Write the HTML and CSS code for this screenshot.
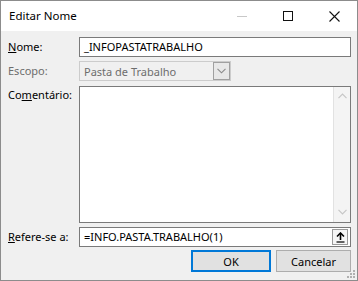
FILE: index.html
```html
<!DOCTYPE html>
<html lang="pt">
<head>
<meta charset="utf-8">
<link rel="stylesheet" href="styles.css">
</head>
<body>
<div class="window">
  <div class="titlebar">
    <div class="title">Editar Nome</div>
    <div class="controls">
      <div class="ctl"><svg width="10" height="10" viewBox="0 0 10 10"><line x1="0" y1="5.5" x2="10" y2="5.5" stroke="#c8c8c8" stroke-width="1"/></svg></div>
      <div class="ctl"><svg width="10" height="10" viewBox="0 0 10 10"><rect x="0.5" y="0.5" width="9" height="9" fill="none" stroke="#111" stroke-width="1"/></svg></div>
      <div class="ctl"><svg width="11" height="11" viewBox="0 0 11 11"><path d="M0.5 0.5 L10.5 10.5 M10.5 0.5 L0.5 10.5" stroke="#111" stroke-width="1.1"/></svg></div>
    </div>
  </div>
  <div class="content">
    <div class="row r1">
      <label class="lbl"><u>N</u>ome:</label>
      <div class="field">_INFOPASTATRABALHO</div>
    </div>
    <div class="row r2">
      <label class="lbl dis">Escopo:</label>
      <div class="select">
        <span class="sel-text">Pasta de Trabalho</span>
        <span class="sel-btn"><svg width="9" height="6" viewBox="0 0 9 6"><path d="M0.5 0.8 L4.5 4.8 L8.5 0.8" fill="none" stroke="#8a8a8a" stroke-width="1.1"/></svg></span>
      </div>
    </div>
    <div class="row r3">
      <label class="lbl">Co<u>m</u>entário:</label>
      <div class="textarea">
        <div class="scroll">
          <svg width="9" height="6" viewBox="0 0 9 6"><path d="M0.5 5.2 L4.5 1.2 L8.5 5.2" fill="none" stroke="#c6c6c6" stroke-width="1.2"/></svg>
          <svg width="9" height="6" viewBox="0 0 9 6"><path d="M0.5 0.8 L4.5 4.8 L8.5 0.8" fill="none" stroke="#c6c6c6" stroke-width="1.2"/></svg>
        </div>
      </div>
    </div>
    <div class="row r4">
      <label class="lbl"><u>R</u>efere-se a:</label>
      <div class="field ref">
        <span>=INFO.PASTA.TRABALHO(1)</span>
        <span class="collapse"><svg width="9" height="11" viewBox="0 0 9 11"><path d="M4.5 1 L4.5 8" stroke="#000" stroke-width="1.6"/><path d="M1 4.5 L4.5 1 L8 4.5" fill="none" stroke="#000" stroke-width="1.6"/><path d="M0.5 10 L8.5 10" stroke="#000" stroke-width="1.2"/></svg></span>
      </div>
    </div>
    <div class="buttons">
      <div class="btn ok">OK</div>
      <div class="btn">Cancelar</div>
    </div>
  </div>
  <svg class="grip" width="12" height="12" viewBox="0 0 12 12"><g fill="#b0b0b0"><rect x="9" y="9" width="2" height="2"/><rect x="6" y="9" width="2" height="2"/><rect x="9" y="6" width="2" height="2"/><rect x="3" y="9" width="2" height="2"/><rect x="6" y="6" width="2" height="2"/><rect x="9" y="3" width="2" height="2"/></g></svg>
</div>
</body>
</html>
```
FILE: styles.css
```css
* { box-sizing: border-box; }
html, body { margin: 0; padding: 0; background: #f0f0f0; }
body { font-family: "Noto Sans", "Open Sans", sans-serif; font-size: 11px; color: #000; }
.window {
  position: relative;
  width: 358px;
  height: 281px;
  border: 1px solid #8c8c8c;
  background: #f0f0f0;
  display: flex;
  flex-direction: column;
}
.titlebar {
  height: 30px;
  background: #fff;
  display: flex;
  align-items: center;
  flex: none;
}
.title { padding-left: 8px; flex: 1; line-height: 16px; padding-bottom: 1px; font-size: 11.5px; }
.controls { display: flex; height: 30px; }
.ctl { width: 46px; height: 30px; display: flex; align-items: center; justify-content: center; }
.content { padding: 6px 6px 0 7px; display: flex; flex-direction: column; }
.row { display: grid; grid-template-columns: 71px 1fr; align-items: center; }
.lbl { line-height: 16px; }
.lbl.dis { color: #6d6d6d; }
.field {
  height: 20px;
  background: #fff;
  border: 1px solid #7a7a7a;
  padding-left: 4px;
  line-height: 18px;
  display: flex;
  align-items: center;
}
.r2 { margin-top: 4px; }
.select {
  width: 152px;
  height: 20px;
  border: 1px solid #cccccc;
  display: flex;
  align-items: center;
  justify-content: space-between;
  color: #6d6d6d;
  padding-left: 4px;
}
.sel-btn {
  width: 17px;
  height: 18px;
  border: 1px solid #a0a0a0;
  background: #e8e8e8;
  display: flex;
  align-items: center;
  justify-content: center;
}
.r3 { margin-top: 5px; align-items: start; }
.r3 .lbl { margin-top: 1px; }
.textarea {
  height: 137px;
  background: #fff;
  border: 1px solid #7a7a7a;
  display: flex;
  justify-content: flex-end;
}
.scroll {
  width: 17px;
  background: #f4f4f4;
  border-left: 1px solid #e2e2e2;
  display: flex;
  flex-direction: column;
  justify-content: space-between;
  align-items: center;
  padding: 6px 0 7px;
}
.r4 { margin-top: 4px; }
.ref { justify-content: space-between; padding-right: 2px; }
.collapse {
  width: 16px;
  height: 16px;
  border: 1px solid #9a9a9a;
  background: #f6f6f6;
  display: flex;
  align-items: center;
  justify-content: center;
}
.buttons { display: flex; justify-content: flex-end; gap: 5px; margin-top: 3px; }
.btn {
  height: 22px;
  background: #e1e1e1;
  border: 1px solid #adadad;
  display: flex;
  align-items: center;
  justify-content: center;
  width: 75px;
}
.btn.ok { width: 80px; border: 2px solid #0078d7; }
.grip { position: absolute; right: 1px; bottom: 1px; }
```
